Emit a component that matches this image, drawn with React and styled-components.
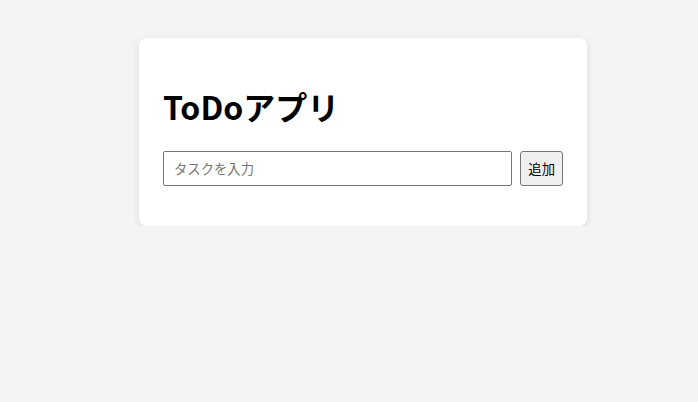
import React, { useState } from "react";
import styled, { createGlobalStyle } from "styled-components";

const GlobalStyle = createGlobalStyle`
  body {
    margin: 8px;
    background: #f4f4f4;
    font-family: "Noto Sans CJK JP", "Noto Sans", sans-serif;
  }
`;

const Page = styled.div`
  display: flex;
  justify-content: center;
  padding: 30px 0 0 28px;
`;

const Card = styled.div`
  width: 400px;
  padding: 24px;
  background: #fff;
  border-radius: 8px;
  box-shadow: 0 2px 8px rgba(0, 0, 0, 0.1);
`;

const Title = styled.h1`
  margin: 21.44px 0;
  font-size: 32px;
  font-weight: 700;
  color: #000;
`;

const Form = styled.form`
  display: flex;
  gap: 8px;
`;

const TaskInput = styled.input`
  flex: 1;
  height: 35px;
  box-sizing: border-box;
  padding: 0 10px;
  border: 1px solid #767676;
  border-radius: 2px;
  font-family: inherit;
  font-size: 13.33px;
  color: #000;
  &::placeholder {
    color: #757575;
  }
`;

const AddButton = styled.button`
  height: 35px;
  padding: 0 7px;
  border: 1px solid #767676;
  border-radius: 3px;
  background: #efefef;
  font-family: inherit;
  font-size: 13.33px;
  color: #000;
`;

const TaskList = styled.ul`
  margin: 16px 0 0;
  padding: 0;
  list-style: none;
`;

export default function App() {
  const [text, setText] = useState("");
  const [todos, setTodos] = useState([]);

  function handleAdd(e) {
    e.preventDefault();
    if (!text.trim()) return;
    setTodos([...todos, text]);
    setText("");
  }

  return (
    <>
      <GlobalStyle />
      <Page>
        <Card>
          <Title>ToDoアプリ</Title>
          <Form onSubmit={handleAdd}>
            <TaskInput
              placeholder="タスクを入力"
              value={text}
              onChange={e => setText(e.target.value)}
            />
            <AddButton type="submit">追加</AddButton>
          </Form>
          <TaskList>
            {todos.map((t, i) => (
              <li key={i}>{t}</li>
            ))}
          </TaskList>
        </Card>
      </Page>
    </>
  );
}
